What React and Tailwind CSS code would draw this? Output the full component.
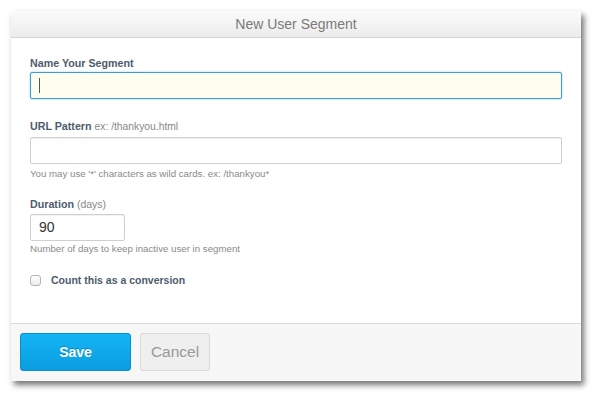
export default function App() {
  return (
    <div className="w-[600px] h-[400px] bg-white pt-[11px] pl-[11px]" style={{ fontFamily: '"Liberation Sans", Arial, sans-serif' }}>
      <div className="w-[570px] h-[370px] flex flex-col bg-white shadow-[3px_4px_6px_rgba(0,0,0,0.55)]">
        <div className="h-[27px] shrink-0 flex items-center justify-center bg-gradient-to-b from-[#fbfbfb] to-[#ececec] border-b border-[#d4d4d4] text-[14px] text-[#7a7a7a]">
          New User Segment
        </div>
        <div className="flex-1 px-[19px] pt-[18px] flex flex-col">
          <div className="text-[10.7px] leading-[14px] font-bold text-[#4d5c6d]">Name Your Segment</div>
          <div className="mt-[2px] h-[27px] border border-[#3a9fd8] rounded-[2px] bg-[#fdfdf0] shadow-[0_0_2px_rgba(58,159,216,0.6)] flex items-center pl-[8px]">
            <div className="w-[1px] h-[15px] bg-[#555]"></div>
          </div>
          <div className="mt-[20px] text-[10.7px] leading-[14px] text-[#4d5c6d]">
            <span className="font-bold">URL Pattern</span> <span className="text-[#888] text-[10.3px]">ex: /thankyou.html</span>
          </div>
          <div className="mt-[3px] h-[27px] border border-[#cfcfcf] rounded-[2px] bg-white shadow-[inset_0_1px_1px_rgba(0,0,0,0.06)]"></div>
          <div className="mt-[4px] text-[9.7px] leading-[12px] text-[#8a8a8a]">You may use '*' characters as wild cards. ex: /thankyou*</div>
          <div className="mt-[17px] text-[10.7px] leading-[14px] text-[#4d5c6d]">
            <span className="font-bold">Duration</span> <span className="text-[#888] text-[10.5px]">(days)</span>
          </div>
          <div className="mt-[3px] w-[95px] h-[27px] border border-[#cfcfcf] rounded-[2px] bg-white flex items-center pl-[8px] text-[14px] text-[#333] shadow-[inset_0_1px_1px_rgba(0,0,0,0.06)]">90</div>
          <div className="mt-[2px] text-[9.7px] leading-[12px] text-[#8a8a8a]">Number of days to keep inactive user in segment</div>
          <div className="mt-[18px] flex items-center">
            <div className="w-[11px] h-[11px] border border-[#b5b5b5] rounded-[3px] bg-gradient-to-b from-white to-[#ececec]"></div>
            <div className="ml-[10px] text-[10.5px] leading-[14px] font-bold text-[#4d5c6d]">Count this as a conversion</div>
          </div>
        </div>
        <div className="h-[58px] shrink-0 border-t border-[#dcdcdc] bg-[#f7f7f7] pt-[9px] pl-[9px] flex items-start gap-[9px]">
          <div className="w-[111px] h-[38px] rounded-[3px] bg-gradient-to-b from-[#14b4f4] to-[#0a9ee0] border border-[#0b8ccb] flex items-center justify-center text-white font-bold text-[14px] [text-shadow:0_-1px_0_rgba(0,0,0,0.25)]">Save</div>
          <div className="w-[70px] h-[38px] rounded-[3px] bg-[#efefef] border border-[#dadada] flex items-center justify-center text-[#999] text-[15.5px]">Cancel</div>
        </div>
      </div>
    </div>
  );
}
